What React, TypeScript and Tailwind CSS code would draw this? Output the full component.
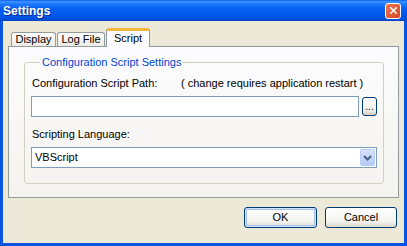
import { X } from "lucide-react";

const FONT = "font-['Tahoma','Liberation_Sans',Arial,sans-serif]";

const TABS = [
  { name: "Display", w: "w-[45px]" },
  { name: "Log File", w: "w-[48px]" },
];

export default function App() {
  return (
    <div className={`w-[407px] h-[246px] flex flex-col bg-[#0a55e0] ${FONT} text-[11px] text-black`}>
      {/* title bar */}
      <div className="h-[21px] flex items-center justify-between pl-[3px] pr-[6px] bg-[linear-gradient(to_bottom,#0a5cf0_0%,#3d95ff_8%,#1e7cff_18%,#0861f0_40%,#0058ee_70%,#0151e0_90%,#0343c0_100%)]">
        <span className="font-['Liberation_Sans',Arial,sans-serif] font-bold text-[12px] text-white [text-shadow:1px_1px_0_#0a2a8a] leading-none">
          Settings
        </span>
        <button className="w-[16px] h-[16px] rounded-[3px] border border-white bg-[linear-gradient(to_bottom_right,#e97a55,#d8461f)] flex items-center justify-center">
          <X size={11} strokeWidth={3} className="text-white" />
        </button>
      </div>

      {/* client area */}
      <div className="flex-1 mx-[3px] mb-[3px] bg-[#ece9d8] px-[5px] flex flex-col">
        {/* tab strip */}
        <div className="h-[25px] flex items-end pl-[3px]">
          {TABS.map((t) => (
            <div
              key={t.name}
              className={`${t.w} h-[14px] mr-[1px] border border-b-0 border-[#919b9c] rounded-t-[3px] bg-[linear-gradient(to_bottom,#ffffff,#ecebe6)] flex items-center justify-center leading-none`}
            >
              {t.name}
            </div>
          ))}
          <div className="relative z-10 -mb-px w-[44px] h-[19px] border border-b-0 border-[#919b9c] border-t-[3px] border-t-[#f6b73d] rounded-t-[3px] bg-[#fcfcfe] flex items-center justify-center leading-none pb-[1px]">
            Script
          </div>
        </div>

        {/* tab panel */}
        <div className="h-[152px] border border-[#919b9c] bg-[linear-gradient(to_bottom,#fcfcfe,#f4f3ee)] pl-[15px] pr-[14px] pt-[9px]">
          <fieldset className="border border-[#d0d0bf] rounded-[3px] px-[6px] pb-[15px]">
            <legend className="ml-[9px] px-[2px] text-[#0046d5] leading-[13px]">Configuration Script Settings</legend>
            <div className="mt-[8px] flex leading-[13px] pl-[1px]">
              <span className="w-[149px]">Configuration Script Path:</span>
              <span>( change requires application restart )</span>
            </div>
            <div className="mt-[6px] flex items-center gap-[3px]">
              <input className="flex-1 h-[21px] border border-[#7f9db9] bg-white outline-none px-[3px]" />
              <button className="w-[15px] h-[19px] border border-[#003c74] rounded-[3px] bg-[linear-gradient(to_bottom,#ffffff,#f0f0ea_70%,#d6d0c5)] flex items-end justify-center pb-[3px] leading-none text-[10px]">
                ...
              </button>
            </div>
            <div className="mt-[11px] leading-[13px] pl-[1px]">Scripting Language:</div>
            <div className="mt-[6px] h-[21px] border border-[#7f9db9] bg-white flex items-center pl-[3px] pr-[1px]">
              <span className="flex-1">VBScript</span>
              <div className="w-[15px] h-[17px] rounded-[2px] border border-[#b9cdf7] bg-[linear-gradient(to_bottom,#d6e3fd,#b2c8f8)] flex items-center justify-center">
                <svg width="9" height="6" viewBox="0 0 9 6">
                  <path d="M1 1 L4.5 4.5 L8 1" fill="none" stroke="#4d6185" strokeWidth="2" />
                </svg>
              </div>
            </div>
          </fieldset>
        </div>

        {/* buttons */}
        <div className="flex justify-end gap-[8px] pt-[9px] pr-[2px]">
          <button className="w-[73px] h-[21px] border border-[#003c74] rounded-[3px] bg-[linear-gradient(to_bottom,#ffffff,#f3f3ef_70%,#dcd8cd)] shadow-[inset_0_0_0_1px_#cee7ff,inset_0_0_0_2px_#a7bdea] leading-none">
            OK
          </button>
          <button className="w-[72px] h-[21px] border border-[#003c74] rounded-[3px] bg-[linear-gradient(to_bottom,#ffffff,#f3f3ef_70%,#dcd8cd)] leading-none">
            Cancel
          </button>
        </div>
      </div>
    </div>
  );
}
